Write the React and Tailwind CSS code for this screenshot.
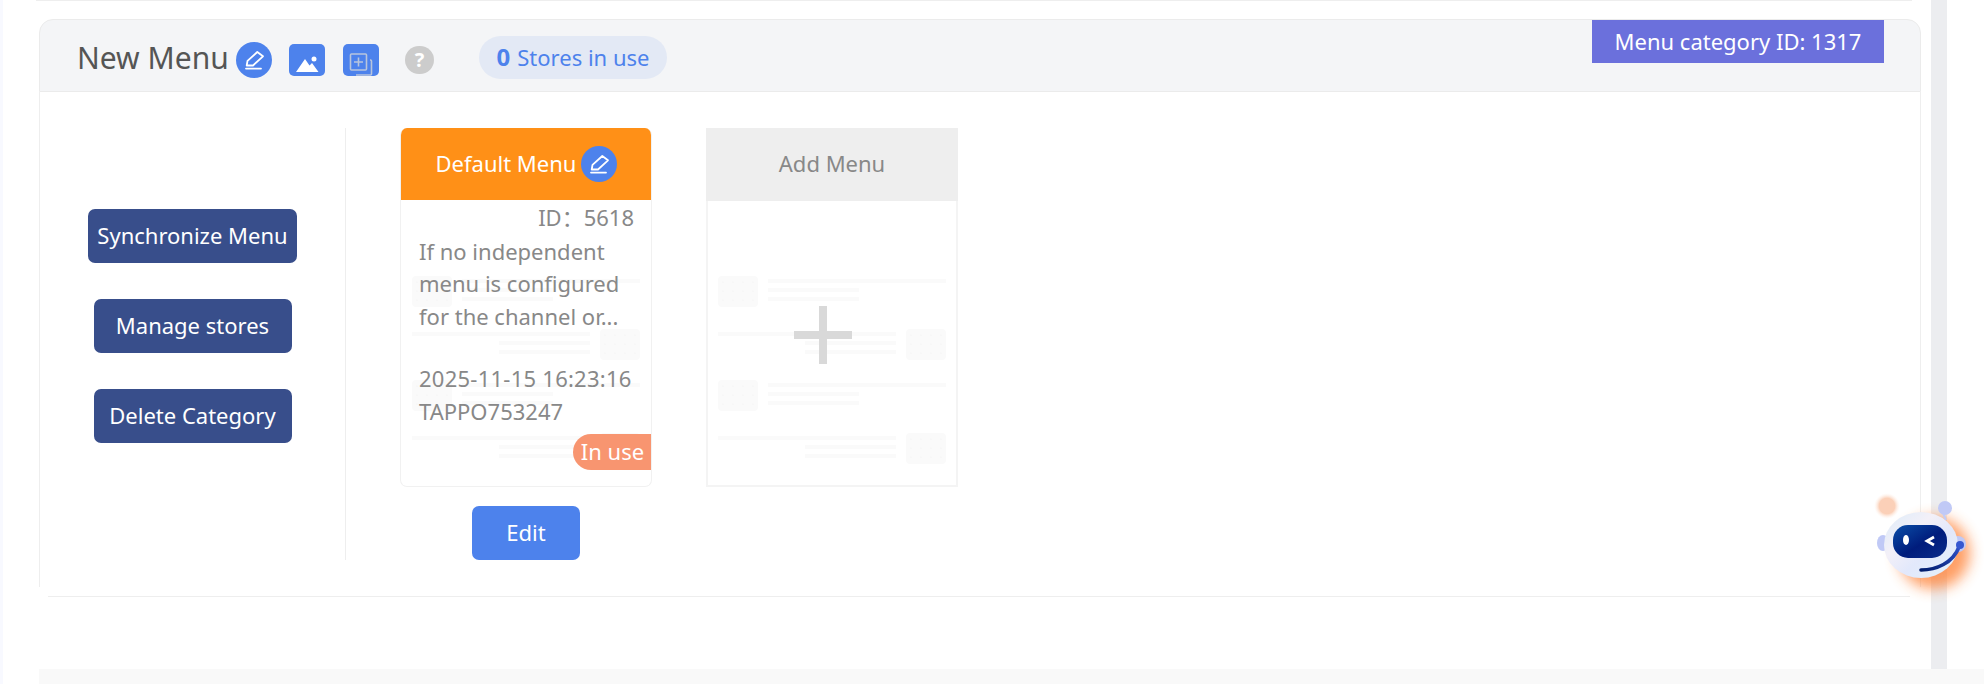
const font = 'font-["Noto_Sans","Noto_Sans_CJK_SC",sans-serif]';

function PenIcon({ className }) {
  return (
    <svg viewBox="0 0 24 24" className={className} fill="none" stroke="#fff" strokeWidth="1.8" strokeLinejoin="round" strokeLinecap="round">
      <path d="M4.7 17.5l.8-4.6 9.8-8.9 5.7 4.3-10 9.2z" />
      <path d="M4 20.6h15" />
    </svg>
  );
}

function ImageIcon() {
  return (
    <div className="h-8 w-9 rounded-[5px] bg-[#4d82ec]">
      <svg viewBox="0 0 36 32" className="h-8 w-9" fill="#fff">
        <circle cx="25" cy="15" r="2.5" />
        <path d="M7 28L16 15 20.5 21.5 23 19 29.5 28z" />
      </svg>
    </div>
  );
}

function CopyIcon() {
  return (
    <div className="h-8 w-9 overflow-hidden rounded-[5px] bg-[#4d82ec]">
      <svg viewBox="0 0 36 32" className="h-8 w-9" fill="none" stroke="#b8c5dd" strokeWidth="1.6">
        <rect x="7.5" y="10" width="16" height="16" rx="1" />
        <path d="M15.5 13.5v9M11 18h9" />
        <path d="M27 16h.5a1 1 0 0 1 1 1v13a1 1 0 0 1-1 1H13" />
      </svg>
    </div>
  );
}

// faded list drawing behind the card text
function Skeleton({ className }) {
  const row = (y, mirrored) => {
    const sqX = mirrored ? 200 : 12;
    const dots = [];
    for (let i = 0; i < 4; i++) {
      for (let j = 0; j < 3; j++) {
        dots.push(<circle key={`${y}-${i}-${j}`} cx={sqX + 5 + i * 10} cy={y + 6 + j * 9} r="0.6" fill="#f0f0f0" />);
      }
    }
    return (
      <g key={y}>
        <rect x={sqX} y={y} width="40" height="31" rx="4" fill="#fafafa" />
        {dots}
        <rect x={mirrored ? 12 : 62} y={y + 3} width="178" height="4" fill="#fafafa" />
        <rect x={mirrored ? 99 : 62} y={y + 12} width="91" height="4" fill="#fafafa" />
        <rect x={mirrored ? 99 : 62} y={y + 21} width="91" height="4" fill="#fafafa" />
      </g>
    );
  };
  return (
    <svg viewBox="0 0 252 359" className={className}>
      {row(148, false)}
      {row(201, true)}
      {row(252, false)}
      {row(305, true)}
    </svg>
  );
}

function Robot() {
  return (
    <svg viewBox="0 0 116 116" className="absolute left-[1868px] top-[490px] h-[116px] w-[116px]">
      <defs>
        <filter id="soft" x="-50%" y="-50%" width="200%" height="200%">
          <feGaussianBlur stdDeviation="7" />
        </filter>
        <radialGradient id="dot" cx="50%" cy="50%" r="50%">
          <stop offset="60%" stopColor="#fbd0b8" />
          <stop offset="100%" stopColor="#fff1e9" stopOpacity="0" />
        </radialGradient>
        <linearGradient id="head" x1="0" y1="0" x2="1" y2="1">
          <stop offset="0%" stopColor="#dcebf8" />
          <stop offset="35%" stopColor="#f3f0f8" />
          <stop offset="60%" stopColor="#e2e8fb" />
          <stop offset="100%" stopColor="#e4f3fb" />
        </linearGradient>
        <linearGradient id="visor" x1="0" y1="0" x2="1" y2="1">
          <stop offset="0%" stopColor="#0b4fa8" />
          <stop offset="55%" stopColor="#001c7c" />
          <stop offset="100%" stopColor="#0a2c8a" />
        </linearGradient>
        <linearGradient id="band" x1="0" y1="1" x2="1" y2="0">
          <stop offset="0%" stopColor="#001c6c" />
          <stop offset="100%" stopColor="#2f52c8" />
        </linearGradient>
      </defs>
      <circle cx="19" cy="16" r="13" fill="url(#dot)" />
      <circle cx="66" cy="63" r="36" fill="#ff7f30" opacity="0.75" filter="url(#soft)" />
      <path d="M75 23l3 7" stroke="#c3ccf6" strokeWidth="2" />
      <circle cx="77" cy="18" r="7" fill="#c0c9f6" />
      <ellipse cx="15" cy="53" rx="6" ry="8" fill="#c0c9f6" />
      <ellipse cx="90" cy="54" rx="8" ry="8" fill="#c0c9f6" />
      <ellipse cx="53" cy="55" rx="37" ry="33" fill="url(#head)" />
      <rect x="25" y="35" width="54" height="33" rx="15" fill="url(#visor)" />
      <ellipse cx="38" cy="50" rx="3" ry="5" fill="#fff" />
      <path d="M66 47l-7 4 7 4" fill="none" stroke="#fff" strokeWidth="2.8" />
      <path d="M53 80C68 80 85 73 91 57" fill="none" stroke="url(#band)" strokeWidth="3.6" strokeLinecap="round" />
      <circle cx="92" cy="55" r="4" fill="#3658d0" />
    </svg>
  );
}

function SideButton({ children, className }) {
  return (
    <button className={`flex h-[54px] items-center justify-center rounded-[7px] bg-[#384e8b] pb-[2px] text-[22px] text-white ${className}`}>
      {children}
    </button>
  );
}

export default function App() {
  return (
    <div className={`relative flex h-[684px] w-[1984px] overflow-hidden bg-white ${font}`}>
      <div className="w-[3px] bg-[#f8f9ff]" />
      <div className="flex-1">
        <div className="flex h-[669px]">
          <div className="w-[1928px]">
            <div className="ml-[33px] h-px w-[1876px] bg-[#eeeeee]" />
            <div className="relative ml-[36px] mr-[10px] mt-[18px]">
              <div className="flex h-[73px] items-center rounded-t-[14px] border border-[#ebebeb] bg-[#f4f5f7] pl-[37px]">
                <span className="mt-1 w-[159px] text-[30px] leading-none text-[#555555]">New Menu</span>
                <div className="mt-2 flex h-9 w-9 items-center justify-center rounded-full bg-[#4d82ec]">
                  <PenIcon className="h-6 w-6" />
                </div>
                <div className="ml-[17px] mt-2"><ImageIcon /></div>
                <div className="ml-[18px] mt-2"><CopyIcon /></div>
                <div className="ml-[26px] mt-2 flex h-[28px] w-[29px] items-center justify-center rounded-full bg-[#cccccc] text-[20px] font-bold text-white">?</div>
                <div className="ml-[45px] mt-[3px] flex h-[43px] w-[188px] items-center justify-center rounded-full bg-[#e3e9f5] text-[22px] text-[#4d82ec]">
                  <span className="mr-[7px] text-[24px] font-bold">0</span>Stores in use
                </div>
              </div>
              <div className="absolute right-[37px] top-px flex h-[43px] w-[292px] items-center justify-center bg-[#6b70dc] text-[22px] text-white">
                Menu category ID: 1317
              </div>
              <div className="flex h-[495px] border-x border-[#eeeeee] pt-[36px]">
                <div className="flex h-[432px] w-[306px] flex-col items-center gap-9 border-r border-[#eeeeee] pt-[81px]">
                  <SideButton className="w-[209px]">Synchronize Menu</SideButton>
                  <SideButton className="w-[198px]">Manage stores</SideButton>
                  <SideButton className="w-[198px]">Delete Category</SideButton>
                </div>
                <div className="ml-[54px] flex gap-[54px]">
                  <div className="w-[252px]">
                    <div className="relative h-[359px] overflow-hidden rounded-[7px] border border-t-0 border-[#f1f1f1]">
                      <Skeleton className="absolute left-[-1px] top-0 h-[359px] w-[252px]" />
                      <div className="relative flex h-[72px] items-center justify-center bg-[#ff9017] pl-px text-[22px] text-white">
                        <span className="pb-[2px]">Default Menu</span>
                        <div className="ml-[5px] flex h-9 w-9 items-center justify-center rounded-full bg-[#4d82ec]">
                          <PenIcon className="h-6 w-6" />
                        </div>
                      </div>
                      <div className="relative pl-[18px] pr-[17px] pt-px text-[22px] leading-[32.5px] text-[#888888]">
                        <div className="text-right">ID：5618</div>
                        <div className="mt-px">If no independent menu is configured for the channel or...</div>
                        <div className="mt-[30px] tracking-[0.25px]">2025-11-15 16:23:16</div>
                        <div>TAPPO753247</div>
                      </div>
                      <div className="absolute right-[-1px] top-[306px] flex h-9 w-[79px] items-center justify-center rounded-l-full bg-[#f89570] pb-[2px] text-[22px] text-white">
                        In use
                      </div>
                    </div>
                    <button className="mx-auto mt-[19px] flex h-[54px] w-[108px] items-center justify-center rounded-[7px] bg-[#4d82ec] pb-[2px] text-[22px] text-white">
                      Edit
                    </button>
                  </div>
                  <div className="relative h-[359px] w-[252px] border-x-2 border-b-2 border-[#f4f4f4]">
                    <Skeleton className="absolute left-[-2px] top-0 h-[359px] w-[252px]" />
                    <div className="relative mx-[-2px] flex h-[73px] items-center justify-center bg-[#eeeeee] pb-[2px] text-[22px] text-[#888888]">
                      Add Menu
                    </div>
                    <div className="absolute left-[111px] top-[178px] h-[58px] w-2 bg-[#d9d9d9]" />
                    <div className="absolute left-[86px] top-[203px] h-2 w-[58px] bg-[#d9d9d9]" />
                  </div>
                </div>
              </div>
              <div className="ml-[9px] mt-[9px] h-px w-[1862px] bg-[#eeeeee]" />
            </div>
          </div>
          <div className="w-4 bg-[#ecedf0]" />
        </div>
        <div className="ml-[36px] h-[15px] bg-[#f9f9f9]" />
      </div>
      <Robot />
    </div>
  );
}
